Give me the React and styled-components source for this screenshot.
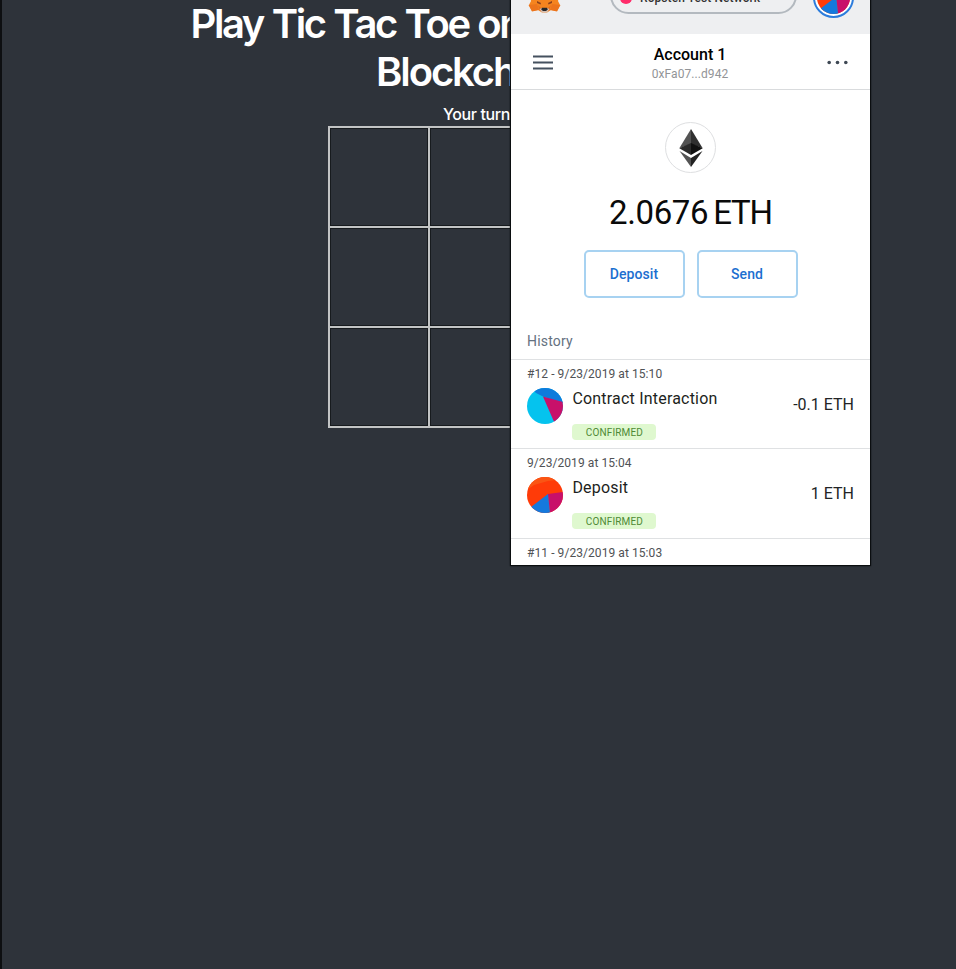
import React from 'react';
import styled, { createGlobalStyle } from 'styled-components';

const GlobalStyle = createGlobalStyle`
  *, *::before, *::after { box-sizing: border-box; }
  body { margin: 0; background: #2e333a; }
  h1, p { margin: 0; font-weight: inherit; }
`;

const Page = styled.div`
  position: relative;
  width: 956px;
  height: 969px;
  overflow: hidden;
  background: #2e333a;
  border-left: 2px solid #0d0f11;
  color: #fff;
  font-family: Inter, 'Liberation Sans', sans-serif;
`;

const Game = styled.main`
  display: flex;
  flex-direction: column;
  align-items: flex-start;
`;

const Title = styled.h1`
  font-size: 40px;
  font-weight: 600;
  line-height: 48px;
  white-space: nowrap;
`;

const TitleLine = styled.span`
  display: block;
  padding-left: ${(p) => p.$indent}px;
  letter-spacing: ${(p) => p.$tracking}px;
  word-spacing: 1px;
`;

const Turn = styled.p`
  padding: 7px 0 1px 441px;
  font-size: 16px;
  line-height: 22px;
  font-weight: 500;
  letter-spacing: -0.4px;
`;

const Board = styled.div`
  display: grid;
  grid-template: repeat(3, 98px) / repeat(3, 98px);
  gap: 2px;
  margin-left: 326px;
  padding: 2px;
  border: 0;
  background: #c2c4c4;
`;

const Cell = styled.div`
  background: #2e333a;
  border: 1px solid #171b1e;
`;

const Popup = styled.aside`
  position: absolute;
  top: 0;
  left: 509px;
  display: flex;
  flex-direction: column;
  width: 359px;
  height: 564.5px;
  overflow: hidden;
  background: #fff;
  color: #111;
  font-family: Roboto, sans-serif;
`;

const Shadow = styled.div`
  position: absolute;
  top: -4px;
  left: 509px;
  width: 359px;
  height: 568.5px;
  box-shadow: 0 0 1px 1px #0b0e10, 0 0 3px rgba(0, 0, 0, 0.3);
`;

const NetworkBar = styled.header`
  display: flex;
  align-items: flex-end;
  flex: 0 0 34px;
  height: 34px;
  padding: 0 16px;
  background: #eeeff1;
`;

const FoxSlot = styled.div`
  flex: 0 0 83px;
  height: 34px;
  padding-left: 1px;
  svg { display: block; }
`;

const Network = styled.div`
  display: flex;
  align-items: center;
  width: 187px;
  height: 37px;
  margin: 0 1px 20px 0;
  padding: 5px 13px 0 8px;
  border: 2px solid #b3b9bf;
  border-radius: 18.5px;
  font-size: 12px;
  font-weight: 500;
  line-height: 14px;
  color: #333;
`;

const NetworkDot = styled.i`
  width: 12px;
  height: 12px;
  margin: 0 8px 1px 0;
  border-radius: 50%;
  background: #ff2d6b;
`;

const NetworkName = styled.span`
  flex: 1;
  white-space: nowrap;
  letter-spacing: 0.08px;
`;

const Avatar = styled.div`
  width: 41px;
  height: 41px;
  margin: 0 0 16px 15px;
  padding: 2px;
  border: 2px solid #2c7cdc;
  border-radius: 50%;
  background: #fff;
  svg { display: block; }
`;

const AccountBar = styled.section`
  display: flex;
  align-items: center;
  justify-content: space-between;
  flex: 0 0 56px;
  padding: 1px 22px 0;
  border-bottom: 1px solid #d9dbdd;
`;

const Account = styled.div`
  text-align: center;
  padding-top: 4px;
`;

const AccountName = styled.p`
  font-size: 16px;
  font-weight: 500;
  line-height: 18px;
  color: #000;
`;

const Address = styled.p`
  padding-top: 3px;
  font-size: 12px;
  line-height: 15px;
  letter-spacing: 0.08px;
  color: #929497;
`;

const Balance = styled.section`
  display: flex;
  flex-direction: column;
  align-items: center;
  flex: 0 0 269px;
  padding-top: 32px;
`;

const Coin = styled.div`
  display: flex;
  align-items: center;
  justify-content: center;
  width: 51px;
  height: 51px;
  border: 1.5px solid #dedfe1;
  border-radius: 50%;
`;

const Amount = styled.p`
  display: flex;
  gap: 5px;
  margin-top: 20px;
  font-size: 33px;
  line-height: 40px;
  color: #0a0a0a;
`;

const Digits = styled.span`
  letter-spacing: -0.4px;
`;

const Unit = styled.span`
  letter-spacing: -1.2px;
`;

const Actions = styled.div`
  display: flex;
  gap: 12px;
  margin-top: 17px;
`;

const Action = styled.button`
  width: 101px;
  height: 48px;
  padding: 0;
  border: 2px solid #a7d2f1;
  border-radius: 5px;
  background: #fff;
  color: #1c6fd0;
  font: 500 14px/20px Roboto, sans-serif;
  letter-spacing: 0.1px;
`;

const HistoryTitle = styled.p`
  margin-top: auto;
  padding: 0 0 9px 16px;
  align-self: flex-start;
  font-size: 14px;
  line-height: 17px;
  color: #65717f;
  letter-spacing: 0.2px;
`;

const Entry = styled.article`
  flex: 0 0 ${(p) => p.$height}px;
  padding: 7px 16px 0;
  border-top: 1.5px solid #dfe1e3;
`;

const EntryDate = styled.p`
  font-size: 12px;
  line-height: 14px;
  letter-spacing: 0.07px;
  color: #4f5255;
`;

const EntryBody = styled.div`
  display: flex;
  align-items: flex-start;
  padding-top: 7px;
`;

const EntryInfo = styled.div`
  flex: 1;
  padding: 1px 0 0 9.4px;
`;

const EntryName = styled.p`
  font-size: 16px;
  line-height: 20px;
  letter-spacing: 0.2px;
  color: #1d1f21;
`;

const Status = styled.span`
  display: block;
  width: 84px;
  height: 16px;
  margin-top: 15px;
  border-radius: 4px;
  background: #dff8cf;
  color: #4e8a35;
  font-size: 10px;
  font-weight: 400;
  letter-spacing: 0.15px;
  line-height: 17px;
  text-align: center;
`;

const EntryAmount = styled.p`
  padding-top: 7px;
  font-size: 16px;
  line-height: 20px;
  color: #222426;
`;

const Fox = () => (
  <svg width="33" height="34" viewBox="0 0 33 34">
    <path d="M2-3h29l-1 4 2 4-3 6-6-1-4 2.5h-5L10 10l-6 1-3-6 2-4z" fill="#f5841f" />
    <path d="M.5 5L9 4l2 6-7 1.5zM32.5 5L24 4l-2 6 7 1.5z" fill="#ec741c" />
    <path d="M9 1l4 2-.5 1.5L9 3zM24 1l-4 2 .5 1.5L24 3z" fill="#8d421d" />
    <path d="M10 5l3 3h7l3-3-2 6h-9z" fill="#e46e1d" />
    <path d="M11.5 9L14 8h5l2.500 1-2.500 3.500h-5z" fill="#d5bfb2" />
    <path d="M14 7.800h5l.8 1.700-1.800 1.500h-3l-1.800-1.500z" fill="#26282b" />
  </svg>
);

const Ethereum = () => (
  <svg width="24" height="38" viewBox="0 0 24 38">
    <path d="M12 0L.3 19.3 12 15z" fill="#535353" />
    <path d="M12 0l11.7 19.3L12 15z" fill="#303030" />
    <path d="M.3 19.3L12 14v12z" fill="#2b2b2b" />
    <path d="M23.7 19.3L12 14v12z" fill="#111" />
    <path d="M.5 22L12 29v9z" fill="#535353" />
    <path d="M23.5 22L12 29v9z" fill="#222" />
  </svg>
);

const MenuIcon = () => (
  <svg width="20" height="16" viewBox="0 0 20 16" stroke="#45515f" strokeWidth="2.2">
    <path d="M0 2.500h20M0 8.500h20M0 14.500h20" />
  </svg>
);

const DotsIcon = () => (
  <svg width="21" height="5" viewBox="0 0 21 5" fill="#3e4854">
    <circle cx="2.2" cy="2.5" r="1.8" />
    <circle cx="10.5" cy="2.5" r="1.8" />
    <circle cx="18.8" cy="2.5" r="1.8" />
  </svg>
);

const ContractIcon = () => (
  <svg width="36" height="36" viewBox="0 0 36 36">
    <clipPath id="contract"><circle cx="18" cy="18" r="18" /></clipPath>
    <g clipPath="url(#contract)">
      <path d="M0 0h36v36H0z" fill="#05c3ee" />
      <path d="M4 0h32v15L16 8.5 9 5z" fill="#0e7bdc" />
      <path d="M16 8.5L36 14v22h-8z" fill="#c8106a" />
    </g>
  </svg>
);

const WalletIcon = ({ id, size = 36 }) => (
  <svg width={size} height={size} viewBox="0 0 36 36">
    <clipPath id={id}><circle cx="18" cy="18" r="18" /></clipPath>
    <g clipPath={`url(#${id})`}>
      <path d="M0 0h36v36H0z" fill="#ff3b08" />
      <path d="M0 13L7 8l14-4 8-1-5-3H4z" fill="#fa5514" />
      <path d="M21 17l15-2v21H23z" fill="#c8106a" />
      <path d="M21 17L4 30v6h19z" fill="#1579dd" />
    </g>
  </svg>
);

const HISTORY = [
  { date: '#12 - 9/23/2019 at 15:10', name: 'Contract Interaction', amount: '-0.1 ETH', icon: <ContractIcon /> },
  { date: '9/23/2019 at 15:04', name: 'Deposit', amount: '1 ETH', icon: <WalletIcon id="deposit" /> },
];

export default function App() {
  return (
    <>
      <GlobalStyle />
      <Page>
        <Game>
          <Title>
            <TitleLine $indent={188.5} $tracking={-2.4}>Play Tic Tac Toe on</TitleLine>
            <TitleLine $indent={374} $tracking={-2.1}>Blockchain</TitleLine>
          </Title>
          <Turn>Your turn</Turn>
          <Board>
            {Array.from({ length: 9 }, (_, i) => <Cell key={i} />)}
          </Board>
        </Game>
        <Shadow />
        <Popup>
          <NetworkBar>
            <FoxSlot><Fox /></FoxSlot>
            <Network>
              <NetworkDot />
              <NetworkName>Ropsten Test Network</NetworkName>
              <svg width="8" height="5" viewBox="0 0 8 5"><path d="M1 0l3 3 3-3" fill="none" stroke="#777" /></svg>
            </Network>
            <Avatar><WalletIcon id="account" size={33} /></Avatar>
          </NetworkBar>
          <AccountBar>
            <MenuIcon />
            <Account>
              <AccountName>Account 1</AccountName>
              <Address>0xFa07...d942</Address>
            </Account>
            <DotsIcon />
          </AccountBar>
          <Balance>
            <Coin><Ethereum /></Coin>
            <Amount><Digits>2.0676</Digits><Unit>ETH</Unit></Amount>
            <Actions>
              <Action>Deposit</Action>
              <Action>Send</Action>
            </Actions>
            <HistoryTitle>History</HistoryTitle>
          </Balance>
          {HISTORY.map((item) => (
            <Entry key={item.date} $height={89.4}>
              <EntryDate>{item.date}</EntryDate>
              <EntryBody>
                {item.icon}
                <EntryInfo>
                  <EntryName>{item.name}</EntryName>
                  <Status>CONFIRMED</Status>
                </EntryInfo>
                <EntryAmount>{item.amount}</EntryAmount>
              </EntryBody>
            </Entry>
          ))}
          <Entry $height={27}>
            <EntryDate>#11 - 9/23/2019 at 15:03</EntryDate>
          </Entry>
        </Popup>
      </Page>
    </>
  );
}
